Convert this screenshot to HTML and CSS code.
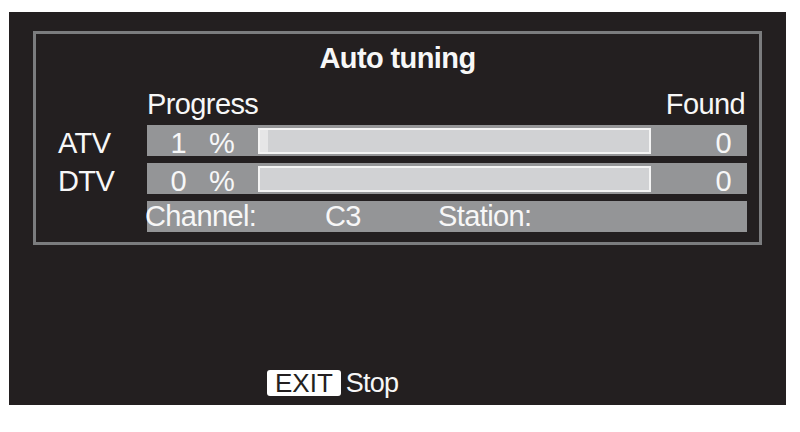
FILE: index.html
```html
<!DOCTYPE html>
<html lang="en">
<head>
  <meta charset="UTF-8">
  <meta name="viewport" content="width=device-width, initial-scale=1.0">
  <title>Auto tuning</title>
  <link rel="stylesheet" href="styles.css">
</head>
<body>

  <div class="screen">

    <!-- Tuning panel -->
    <div class="frame">
      <h1 class="title">Auto tuning</h1>

      <div class="head">
        <span>Progress</span>
        <span class="found-head">Found</span>
      </div>

      <div class="row first">
        <span class="label">ATV</span>
        <div class="bar">
          <span class="num">1</span>
          <span class="pct">%</span>
          <div class="track"><div class="fill" style="width: 2%"></div></div>
          <span class="found">0</span>
        </div>
      </div>

      <div class="row">
        <span class="label">DTV</span>
        <div class="bar">
          <span class="num">0</span>
          <span class="pct">%</span>
          <div class="track"><div class="fill" style="width: 0%"></div></div>
          <span class="found">0</span>
        </div>
      </div>

      <div class="row">
        <span class="label"></span>
        <div class="bar info">
          <span class="ch-label">Channel:</span>
          <span class="ch-value">C3</span>
          <span class="station">Station:</span>
        </div>
      </div>
    </div>

    <!-- Key hint -->
    <div class="footer">
      <span class="key">EXIT</span>
      <span class="hint">Stop</span>
    </div>

  </div>

</body>
</html>
```

FILE: styles.css
```css
body {
  margin: 0;
  background: #ffffff;
  font-family: "Liberation Sans", Arial, sans-serif;
}

.screen {
  margin: 12px 0 0 9px;
  width: 777px;
  height: 393px;
  box-sizing: border-box;
  padding: 19px 0 9px 24px;
  background: #231f20;
  color: #f7f7f7;
  display: flex;
  flex-direction: column;
}

/* Panel */
.frame {
  width: 729px;
  height: 214px;
  box-sizing: border-box;
  border: 3px solid #7b7c7e;
  padding-top: 8px;
  font-size: 29px;
  letter-spacing: -0.6px;
}
.title {
  margin: 0;
  font-size: 29px;
  font-weight: bold;
  line-height: 32px;
  text-align: center;
}
.head {
  display: flex;
  justify-content: space-between;
  width: 600px;
  margin: 14px 0 0 111px;
  line-height: 32px;
}
.found-head {
  padding-right: 2px;
}

/* Rows */
.row {
  display: flex;
  margin-top: 7px;
}
.row.first {
  margin-top: 5px;
}
.label {
  width: 111px;
  box-sizing: border-box;
  padding: 6px 0 0 22px;
  line-height: 25px;
}
.bar {
  width: 600px;
  height: 31px;
  background: #949597;
  display: flex;
  align-items: center;
}
.num,
.pct,
.found {
  height: 31px;
  box-sizing: border-box;
  padding-top: 6px;
  line-height: 25px;
}
.num {
  width: 39px;
  text-align: right;
}
.pct {
  width: 49px;
  margin-left: 23px;
}
.track {
  width: 393px;
  height: 26px;
  box-sizing: border-box;
  border: 2px solid #f4f4f4;
  background: #d1d2d4;
}
.fill {
  height: 100%;
  background: #e6e6e7;
}
.found {
  flex: 1;
  text-align: right;
  padding-right: 16px;
}

/* Channel info */
.info {
  line-height: 31px;
}
.ch-label {
  width: 180px;
  margin-left: -2px;
}
.ch-value {
  width: 113px;
}

/* Footer */
.footer {
  margin-top: auto;
  padding-left: 234px;
  display: flex;
  align-items: center;
}
.key {
  height: 26px;
  padding: 0 8px;
  background: #ffffff;
  color: #231f20;
  border-radius: 3px;
  font-size: 26px;
  line-height: 26px;
}
.hint {
  margin-left: 5px;
  font-size: 27px;
  letter-spacing: -0.8px;
  line-height: 26px;
}
```
